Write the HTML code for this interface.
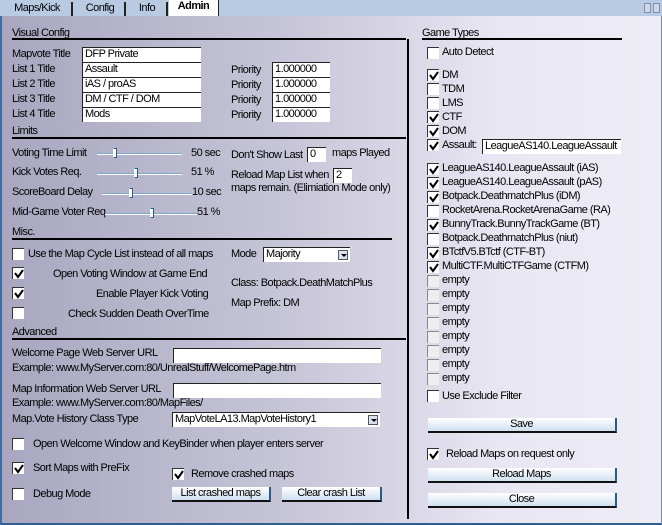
<!DOCTYPE html>
<html><head><meta charset="utf-8"><style>
*{margin:0;padding:0;box-sizing:border-box}
body{width:662px;height:525px;overflow:hidden;position:relative;font:11px "Liberation Sans",sans-serif;color:#000;background:#b9cbe2;letter-spacing:-0.55px}
#main{position:absolute;left:0;top:16px;width:662px;height:509px;background:linear-gradient(90deg,#a9a7c0 0%,#c8c6d8 45%,#e8e6f2 75%,#eeedf6 100%);border-left:2px solid #3c6ea8;border-bottom:2px solid #2e5f8f;border-right:1px solid #7a8aa8}
.t{position:absolute;line-height:14px;white-space:nowrap;font-size:11px}
.hl{position:absolute;height:2px;background:#000}
.in{position:absolute;background:#fff;border-top:1px solid #222;border-left:1px solid #222;height:15px;font-size:11px;line-height:13px;padding-left:2px;white-space:nowrap;overflow:hidden}
.cb{position:absolute;width:12px;height:12px;background:#fff;border-top:1px solid #333;border-left:1px solid #333}
.cb.g{background:#eeeeee;border-color:#888}
.cb svg{position:absolute;left:1px;top:1px}
.sl{position:absolute;height:2px;background:#7ea6c8;border-bottom:1px solid #fff}
.kn{position:absolute;width:4px;height:10px;background:#fff;border:1px solid #2a5a88;border-left-color:#fff}
.btn{position:absolute;height:15px;background:linear-gradient(#ffffff,#cfe0f0);border-bottom:2px solid #111;border-right:2px solid #2a5a8a;text-align:center;line-height:13px;font-size:11px}
.tab{position:absolute;top:2px;height:14px;line-height:13px;text-align:center;font-size:11px}
.dd{position:absolute;right:2px;top:2px;width:10px;height:10px;background:#d8e2ee;border:1px solid #555}
.dd:after{content:"";position:absolute;left:2px;top:3px;border-left:3px solid transparent;border-right:3px solid transparent;border-top:3px solid #000}
</style></head><body>
<div class="tab" style="left:3px;width:70px;border-right:2px solid #222">Maps/Kick</div>
<div class="tab" style="left:76px;width:50px;border-right:2px solid #222">Config</div>
<div class="tab" style="left:128px;width:40px;border-right:2px solid #222">Info</div>
<div class="tab" style="left:169px;width:50px;background:#fff;font-weight:bold;top:0;height:17px;border-right:1px solid #222">Admin</div>
<div style="position:absolute;left:644px;top:3px;width:7px;height:10px;background:#d0d8e8;border:1px solid #8090b0"></div>
<div style="position:absolute;left:653px;top:3px;width:7px;height:10px;background:#d0d8e8;border:1px solid #8090b0"></div>
<div id="main"></div>

<div class="t" style="left:12px;top:26px">Visual Config</div><div class="hl" style="left:12px;top:38px;width:394px"></div>
<div class="t" style="left:12px;top:47px">Mapvote Title</div><div class="in" style="left:82px;top:47px;width:119px">DFP Private</div>
<div class="t" style="left:12px;top:62px">List 1 Title</div><div class="in" style="left:82px;top:62px;width:119px">Assault</div>
<div class="t" style="left:12px;top:77px">List 2 Title</div><div class="in" style="left:82px;top:77px;width:119px">iAS / proAS</div>
<div class="t" style="left:12px;top:92px">List 3 Title</div><div class="in" style="left:82px;top:92px;width:119px">DM / CTF / DOM</div>
<div class="t" style="left:12px;top:107px">List 4 Title</div><div class="in" style="left:82px;top:107px;width:119px">Mods</div>
<div class="t" style="left:231px;top:63px">Priority</div><div class="in" style="left:272px;top:62px;width:58px">1.000000</div>
<div class="t" style="left:231px;top:78px">Priority</div><div class="in" style="left:272px;top:77px;width:58px">1.000000</div>
<div class="t" style="left:231px;top:93px">Priority</div><div class="in" style="left:272px;top:92px;width:58px">1.000000</div>
<div class="t" style="left:231px;top:108px">Priority</div><div class="in" style="left:272px;top:107px;width:58px">1.000000</div>

<div class="t" style="left:12px;top:124px">Limits</div><div class="hl" style="left:12px;top:137px;width:394px"></div>
<div class="t" style="left:12px;top:146px">Voting Time Limit</div><div class="sl" style="left:97px;top:153px;width:85px"></div><div class="kn" style="left:113px;top:148px"></div><div class="t" style="left:191px;top:146px">50 sec</div>
<div class="t" style="left:12px;top:165px">Kick Votes Req.</div><div class="sl" style="left:97px;top:173px;width:85px"></div><div class="kn" style="left:134px;top:168px"></div><div class="t" style="left:191px;top:165px">51 %</div>
<div class="t" style="left:12px;top:185px">ScoreBoard Delay</div><div class="sl" style="left:102px;top:193px;width:90px"></div><div class="kn" style="left:129px;top:188px"></div><div class="t" style="left:192px;top:185px">10 sec</div>
<div class="t" style="left:12px;top:205px">Mid-Game Voter Req.</div><div class="sl" style="left:105px;top:213px;width:92px"></div><div class="kn" style="left:150px;top:208px"></div><div class="t" style="left:197px;top:205px">51 %</div>
<div class="t" style="left:231px;top:148px">Don't Show Last</div><div class="in" style="left:307px;top:147px;width:19px">0</div><div class="t" style="left:332px;top:146px">maps Played</div>
<div class="t" style="left:231px;top:168px">Reload Map List when</div><div class="in" style="left:333px;top:168px;width:19px">2</div>
<div class="t" style="left:231px;top:181px">maps remain. (Elimiation Mode only)</div>

<div class="t" style="left:12px;top:225px">Misc.</div><div class="hl" style="left:12px;top:238px;width:180px"></div><div class="hl" style="left:192px;top:238px;width:200px"></div>
<div class="cb" style="left:12px;top:248px"></div><div class="t" style="left:28px;top:247px">Use the Map Cycle List instead of all maps</div>
<div class="cb" style="left:12px;top:267px"><svg width="10" height="10"><path d="M1 4 L4 8 L9 1" stroke="#000" stroke-width="2" fill="none"/></svg></div><div class="t" style="left:53px;top:267px">Open Voting Window at Game End</div>
<div class="cb" style="left:12px;top:287px"><svg width="10" height="10"><path d="M1 4 L4 8 L9 1" stroke="#000" stroke-width="2" fill="none"/></svg></div><div class="t" style="left:96px;top:287px">Enable Player Kick Voting</div>
<div class="cb" style="left:12px;top:307px"></div><div class="t" style="left:68px;top:307px">Check Sudden Death OverTime</div>
<div class="t" style="left:231px;top:247px">Mode</div><div class="in" style="left:263px;top:247px;width:87px">Majority<span class="dd"></span></div>
<div class="t" style="left:231px;top:276px">Class: Botpack.DeathMatchPlus</div>
<div class="t" style="left:231px;top:296px">Map Prefix: DM</div>

<div class="t" style="left:12px;top:325px">Advanced</div><div class="hl" style="left:12px;top:338px;width:394px"></div>
<div class="t" style="left:12px;top:346px">Welcome Page Web Server URL</div><div class="in" style="left:173px;top:348px;width:208px"></div>
<div class="t" style="left:12px;top:361px">Example: www.MyServer.com:80/UnrealStuff/WelcomePage.htm</div>
<div class="t" style="left:12px;top:382px">Map Information Web Server URL</div><div class="in" style="left:173px;top:383px;width:208px"></div>
<div class="t" style="left:12px;top:396px">Example: www.MyServer.com:80/MapFiles/</div>
<div class="t" style="left:12px;top:412px">Map.Vote History Class Type</div><div class="in" style="left:172px;top:412px;width:208px">MapVoteLA13.MapVoteHistory1<span class="dd"></span></div>
<div class="cb" style="left:12px;top:438px"></div><div class="t" style="left:33px;top:437px">Open Welcome Window and KeyBinder when player enters server</div>
<div class="cb" style="left:12px;top:462px"><svg width="10" height="10"><path d="M1 4 L4 8 L9 1" stroke="#000" stroke-width="2" fill="none"/></svg></div><div class="t" style="left:33px;top:461px">Sort Maps with PreFix</div>
<div class="cb" style="left:172px;top:468px"><svg width="10" height="10"><path d="M1 4 L4 8 L9 1" stroke="#000" stroke-width="2" fill="none"/></svg></div><div class="t" style="left:191px;top:467px">Remove crashed maps</div>
<div class="cb" style="left:12px;top:488px"></div><div class="t" style="left:33px;top:487px">Debug Mode</div>
<div class="btn" style="left:172px;top:487px;width:99px">List crashed maps</div>
<div class="btn" style="left:282px;top:487px;width:100px">Clear crash List</div>

<div style="position:absolute;left:407px;top:39px;width:2px;height:480px;background:#000"></div>

<div class="t" style="left:422px;top:26px">Game Types</div><div class="hl" style="left:422px;top:38px;width:200px"></div>
<div class="cb" style="left:427px;top:47px"></div><div class="t" style="left:442px;top:45px">Auto Detect</div>
<div class="in" style="left:482px;top:139px;width:139px">LeagueAS140.LeagueAssault</div>
<div class="cb" style="left:427px;top:390px"></div><div class="t" style="left:442px;top:389px">Use Exclude Filter</div>
<div class="btn" style="left:428px;top:418px;width:189px">Save</div>
<div class="cb" style="left:427px;top:448px"><svg width="10" height="10"><path d="M1 4 L4 8 L9 1" stroke="#000" stroke-width="2" fill="none"/></svg></div><div class="t" style="left:446px;top:447px">Reload Maps on request only</div>
<div class="btn" style="left:428px;top:468px;width:189px">Reload Maps</div>
<div class="btn" style="left:428px;top:493px;width:189px">Close</div>

<div class="cb" style="left:427px;top:69px"><svg width="10" height="10"><path d="M1 4 L4 8 L9 1" stroke="#000" stroke-width="2" fill="none"/></svg></div><div class="t" style="left:442px;top:68px">DM</div>
<div class="cb" style="left:427px;top:83px"></div><div class="t" style="left:442px;top:82px">TDM</div>
<div class="cb" style="left:427px;top:97px"></div><div class="t" style="left:442px;top:96px">LMS</div>
<div class="cb" style="left:427px;top:111px"><svg width="10" height="10"><path d="M1 4 L4 8 L9 1" stroke="#000" stroke-width="2" fill="none"/></svg></div><div class="t" style="left:442px;top:110px">CTF</div>
<div class="cb" style="left:427px;top:125px"><svg width="10" height="10"><path d="M1 4 L4 8 L9 1" stroke="#000" stroke-width="2" fill="none"/></svg></div><div class="t" style="left:442px;top:124px">DOM</div>
<div class="cb" style="left:427px;top:139px"><svg width="10" height="10"><path d="M1 4 L4 8 L9 1" stroke="#000" stroke-width="2" fill="none"/></svg></div><div class="t" style="left:442px;top:138px">Assault:</div>

<div class="cb" style="left:427px;top:163px"><svg width="10" height="10"><path d="M1 4 L4 8 L9 1" stroke="#000" stroke-width="2" fill="none"/></svg></div><div class="t" style="left:442px;top:161px">LeagueAS140.LeagueAssault (iAS)</div>
<div class="cb" style="left:427px;top:177px"><svg width="10" height="10"><path d="M1 4 L4 8 L9 1" stroke="#000" stroke-width="2" fill="none"/></svg></div><div class="t" style="left:442px;top:175px">LeagueAS140.LeagueAssault (pAS)</div>
<div class="cb" style="left:427px;top:191px"><svg width="10" height="10"><path d="M1 4 L4 8 L9 1" stroke="#000" stroke-width="2" fill="none"/></svg></div><div class="t" style="left:442px;top:189px">Botpack.DeathmatchPlus (iDM)</div>
<div class="cb" style="left:427px;top:205px"></div><div class="t" style="left:442px;top:203px">RocketArena.RocketArenaGame (RA)</div>
<div class="cb" style="left:427px;top:219px"><svg width="10" height="10"><path d="M1 4 L4 8 L9 1" stroke="#000" stroke-width="2" fill="none"/></svg></div><div class="t" style="left:442px;top:217px">BunnyTrack.BunnyTrackGame (BT)</div>
<div class="cb" style="left:427px;top:233px"></div><div class="t" style="left:442px;top:231px">Botpack.DeathmatchPlus (niut)</div>
<div class="cb" style="left:427px;top:247px"><svg width="10" height="10"><path d="M1 4 L4 8 L9 1" stroke="#000" stroke-width="2" fill="none"/></svg></div><div class="t" style="left:442px;top:245px">BTctfV5.BTctf (CTF-BT)</div>
<div class="cb" style="left:427px;top:261px"><svg width="10" height="10"><path d="M1 4 L4 8 L9 1" stroke="#000" stroke-width="2" fill="none"/></svg></div><div class="t" style="left:442px;top:259px">MultiCTF.MultiCTFGame (CTFM)</div>
<div class="cb g" style="left:427px;top:275px"></div><div class="t" style="left:442px;top:273px">empty</div>
<div class="cb g" style="left:427px;top:289px"></div><div class="t" style="left:442px;top:287px">empty</div>
<div class="cb g" style="left:427px;top:303px"></div><div class="t" style="left:442px;top:301px">empty</div>
<div class="cb g" style="left:427px;top:317px"></div><div class="t" style="left:442px;top:315px">empty</div>
<div class="cb g" style="left:427px;top:331px"></div><div class="t" style="left:442px;top:329px">empty</div>
<div class="cb g" style="left:427px;top:345px"></div><div class="t" style="left:442px;top:343px">empty</div>
<div class="cb g" style="left:427px;top:359px"></div><div class="t" style="left:442px;top:357px">empty</div>
<div class="cb g" style="left:427px;top:373px"></div><div class="t" style="left:442px;top:371px">empty</div>
</body></html>
